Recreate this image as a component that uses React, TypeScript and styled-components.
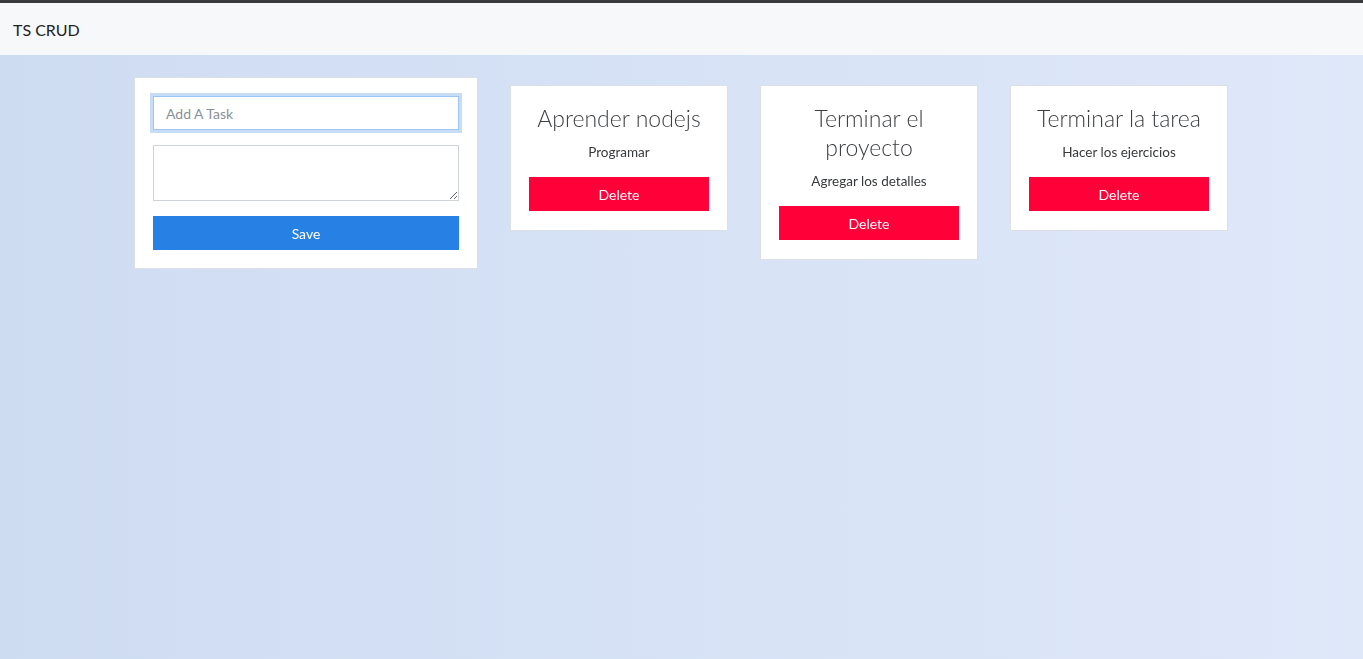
import { useState } from 'react';
import styled, { createGlobalStyle } from 'styled-components';

interface ITask {
  id: number;
  name: string;
  description: string;
}

const initialTasks: ITask[] = [
  { id: 1, name: 'Aprender nodejs', description: 'Programar' },
  { id: 2, name: 'Terminar el proyecto', description: 'Agregar los detalles' },
  { id: 3, name: 'Terminar la tarea', description: 'Hacer los ejercicios' },
];

function App() {
  const [tasks, setTasks] = useState<ITask[]>(initialTasks);
  const [name, setName] = useState<string>('');
  const [description, setDescription] = useState<string>('');

  const saveTask = (e: React.FormEvent) => {
    e.preventDefault();
    if (!name) return;
    setTasks([...tasks, { id: Date.now(), name, description }]);
    setName('');
    setDescription('');
  };

  const deleteTask = (id: number) => {
    setTasks(tasks.filter((task) => task.id !== id));
  };

  return (
    <>
      <GlobalStyle />
      <Navbar>
        <Brand>TS CRUD</Brand>
      </Navbar>
      <Main>
        <Container>
          <FormCard as="form" onSubmit={saveTask}>
            <TitleInput
              type="text"
              placeholder="Add A Task"
              value={name}
              autoFocus
              onChange={(e) => setName(e.target.value)}
            />
            <DescArea
              value={description}
              onChange={(e) => setDescription(e.target.value)}
            />
            <Button type="submit" $variant="primary">
              Save
            </Button>
          </FormCard>
          {tasks.map(({ id, name, description }) => (
            <TaskCard key={id}>
              <TaskTitle>{name}</TaskTitle>
              <TaskDesc>{description}</TaskDesc>
              <Button $variant="danger" onClick={() => deleteTask(id)}>
                Delete
              </Button>
            </TaskCard>
          ))}
        </Container>
      </Main>
    </>
  );
}

const GlobalStyle = createGlobalStyle`
  * { box-sizing: border-box; }
  html, body, #root { margin: 0; height: 100%; }
  body {
    font-family: Lato, "Open Sans", sans-serif;
    color: #373a3c;
    overflow: hidden;
  }
  #root { display: flex; flex-direction: column; }
`;

const Navbar = styled.nav`
  display: flex;
  align-items: center;
  height: 55px;
  padding: 0 13px;
  background: #f7f8fa;
  border-top: 3px solid #3a3b3d;
`;

const Brand = styled.span`
  font-size: 16px;
  color: #222;
`;

const Main = styled.main`
  flex: 1;
  background: linear-gradient(to right, #cedcf2, #dfe8f9);
  padding-top: 22px;
`;

const Container = styled.div`
  width: 1095px;
  margin: 0 auto;
  display: flex;
  align-items: flex-start;
  gap: 32px;
`;

const Card = styled.div`
  flex-shrink: 0;
  background: #fff;
  border: 1px solid #dcdfe3;
`;

const FormCard = styled(Card)`
  width: 344px;
  padding: 18px;
  display: flex;
  flex-direction: column;
  gap: 15px;
`;

const TaskCard = styled(Card)`
  width: 218px;
  margin-top: 8px;
  padding: 18px 18px 19px;
  display: flex;
  flex-direction: column;
  align-items: stretch;
  text-align: center;
`;

const TitleInput = styled.input`
  height: 34px;
  padding: 0 12px;
  font: inherit;
  font-size: 14px;
  color: #373a3c;
  border: 1px solid #9fc6f2;
  box-shadow: 0 0 0 3px #c7dcf5;
  outline: none;
  &::placeholder {
    color: #8a9097;
  }
`;

const DescArea = styled.textarea`
  height: 56px;
  padding: 6px 12px;
  font: inherit;
  font-size: 14px;
  border: 1px solid #ced4da;
  outline: none;
  resize: vertical;
`;

const Button = styled.button<{ $variant: 'primary' | 'danger' }>`
  height: 34px;
  border: none;
  font-family: inherit;
  font-size: 14px;
  color: #fff;
  cursor: pointer;
  background: ${({ $variant }) => ($variant === 'primary' ? '#2780e3' : '#ff0039')};
`;

const TaskTitle = styled.h4`
  margin: 0 0 9px;
  font-size: 23px;
  font-weight: 300;
  line-height: 29px;
  color: #3c3f42;
`;

const TaskDesc = styled.p`
  margin: 0 0 14px;
  font-size: 13.5px;
  line-height: 21px;
`;

export default App;
